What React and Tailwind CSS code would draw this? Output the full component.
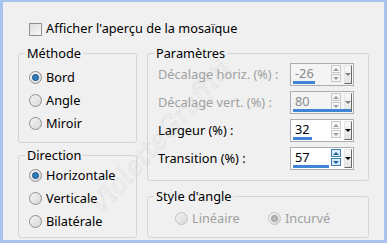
import React from 'react';

const font = { fontFamily: '"Noto Sans", "Open Sans", sans-serif' };

function Radio({ checked, disabled, label, className = '' }) {
  return (
    <div className={`flex items-center gap-[4px] h-[23px] ${className}`}>
      <span
        className={`w-[13px] h-[13px] rounded-full border flex items-center justify-center bg-gradient-to-br from-[#f4f4f4] to-[#d8d8d8] ${
          disabled ? 'border-[#c4c4c4]' : 'border-[#8e8f8f]'
        }`}
      >
        {checked && (
          <span
            className={`w-[7px] h-[7px] rounded-full ${
              disabled ? 'bg-[#b8b8b8] border border-[#9a9a9a]' : 'bg-[#2f7fbf] border border-[#1a4f82]'
            }`}
          />
        )}
      </span>
      <span className={disabled ? 'text-[#a0a0a0]' : 'text-black'}>{label}</span>
    </div>
  );
}

function Arrow({ up, active }) {
  return (
    <span
      className={`w-[10px] h-[8px] border flex items-center justify-center ${
        active ? 'border-[#3c7fb1] bg-[#dcecfc]' : 'border-[#c8c8c8] bg-[#f6f6f6]'
      }`}
    >
      {up ? (
        <span className={`w-0 h-0 border-l-[3px] border-r-[3px] border-b-[3px] border-l-transparent border-r-transparent ${active ? 'border-b-[#1d5d9c]' : 'border-b-[#a0a0a0]'}`} />
      ) : (
        <span className={`w-0 h-0 border-l-[3px] border-r-[3px] border-t-[3px] border-l-transparent border-r-transparent ${active ? 'border-t-[#1d5d9c]' : 'border-t-[#a0a0a0]'}`} />
      )}
    </span>
  );
}

function Spin({ value, bar, disabled, active }) {
  return (
    <div
      className={`relative w-[64px] h-[23px] border border-[#abadb3] flex items-center ${
        disabled ? 'bg-[#f4f4f4]' : 'bg-white'
      }`}
    >
      <span className={`flex-1 pl-[4px] pb-[2px] ${disabled ? 'text-[#8a8a8a]' : 'text-black'}`}>{value}</span>
      <div className="flex flex-col gap-[1px] mr-[3px] mb-[2px]">
        <Arrow up active={active} />
        <Arrow active={active} />
      </div>
      <span className="w-[8px] h-[19px] mr-[1px] mb-[1px] border border-t-[#e4e4e4] border-l-[#e4e4e4] border-r-[#6a6a6a] border-b-[#6a6a6a] bg-gradient-to-b from-[#fafafa] to-[#e2e2e2] flex items-center justify-center">
        <span className={`w-0 h-0 border-l-[3px] border-r-[3px] border-t-[3px] border-l-transparent border-r-transparent ${disabled ? 'border-t-[#808080]' : 'border-t-black'}`} />
      </span>
      <span className="absolute left-[2px] bottom-[1px] h-[3px] bg-[#3f85d4]" style={{ width: bar }} />
    </div>
  );
}

function Group({ title, className, children }) {
  return (
    <fieldset className={`border border-[#d5d5d5] rounded-[3px] px-[10px] ${className}`}>
      <legend className="px-[2px] ml-[-4px] leading-[16px]">{title}</legend>
      {children}
    </fieldset>
  );
}

export default function App() {
  return (
    <div
      className="relative w-[387px] h-[243px] overflow-hidden bg-[#f0f0f0] border-l-[3px] border-r-[3px] border-t-[2px] border-b-[3px] border-[#a9c4ec] text-[12.75px] text-black"
      style={font}
    >
      <div className="pl-[26px] pt-[19px] flex items-center gap-[4px] h-[35px]">
        <span className="w-[13px] h-[13px] border border-[#8e8f8f] bg-gradient-to-br from-[#dedede] to-[#f8f8f8]" />
        <span>Afficher l'aperçu de la mosaïque</span>
      </div>
      <div className="flex gap-[10px] px-[15px] pt-[8px]">
        <div className="w-[119px] flex flex-col gap-[4px]">
          <Group title="Méthode" className="h-[98px]">
            <div className="pt-[5px]">
              <Radio checked label="Bord" />
              <Radio label="Angle" />
              <Radio label="Miroir" />
            </div>
          </Group>
          <Group title="Direction" className="h-[91px]">
            <div className="pt-[1px]">
              <Radio checked label="Horizontale" />
              <Radio label="Verticale" />
              <Radio label="Bilatérale" />
            </div>
          </Group>
        </div>
        <div className="w-[222px] flex flex-col gap-[7px]">
          <Group title="Paramètres" className="h-[136px] pr-[14px]">
            <div className="flex flex-col gap-[5px] pt-[2px]">
              <div className="flex items-center justify-between">
                <span className="text-[#a0a0a0]">Décalage horiz. (%) :</span>
                <Spin value="-26" bar={22} disabled />
              </div>
              <div className="flex items-center justify-between">
                <span className="text-[#a0a0a0]">Décalage vert. (%) :</span>
                <Spin value="80" bar={58} disabled />
              </div>
              <div className="flex items-center justify-between">
                <span>Largeur (%) :</span>
                <Spin value="32" bar={19} />
              </div>
              <div className="flex items-center justify-between">
                <span>Transition (%) :</span>
                <Spin value="57" bar={36} active />
              </div>
            </div>
          </Group>
          <Group title="Style d'angle" className="h-[50px]">
            <div className="flex pl-[17px] pt-[3px]">
              <Radio disabled label="Linéaire" className="w-[93px]" />
              <Radio disabled checked label="Incurvé" />
            </div>
          </Group>
        </div>
      </div>
      <div
        className="absolute left-[62px] top-[122px] w-[180px] text-center -rotate-[48deg] text-[26px] italic text-transparent opacity-30 pointer-events-none select-none [-webkit-text-stroke:0.6px_#b8b8b8] whitespace-nowrap"
        style={{ fontFamily: '"DejaVu Serif", serif' }}
      >
        VioletteGraffiti
      </div>
    </div>
  );
}
